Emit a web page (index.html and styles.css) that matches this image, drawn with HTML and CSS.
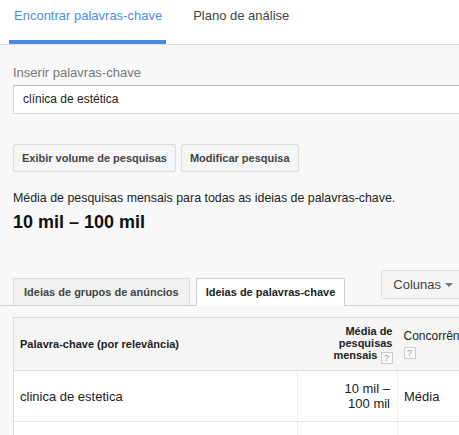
FILE: index.html
```html
<!DOCTYPE html>
<html lang="pt">
<head>
<meta charset="utf-8">
<title>Planejador de palavras-chave</title>
<link rel="stylesheet" href="styles.css">
</head>
<body>
<header class="topnav">
  <div class="toptab active">Encontrar palavras-chave</div>
  <div class="toptab">Plano de análise</div>
</header>
<main class="content">
  <div class="label">Inserir palavras-chave</div>
  <div class="input">clínica de estética</div>
  <div class="buttons">
    <button class="btn">Exibir volume de pesquisas</button>
    <button class="btn">Modificar pesquisa</button>
  </div>
  <p class="avg-label">Média de pesquisas mensais para todas as ideias de palavras-chave.</p>
  <p class="avg-value">10 mil – 100 mil</p>
</main>
<div class="tabrow">
  <div class="tab">Ideias de grupos de anúncios</div>
  <div class="tab selected">Ideias de palavras-chave</div>
  <button class="cols">Colunas <span class="caret"></span></button>
</div>
<div class="tablewrap">
  <table class="grid">
    <thead>
      <tr>
        <th class="c1">Palavra-chave (por relevância)</th>
        <th class="c2">Média de pesquisas mensais <span class="q">?</span></th>
        <th class="c3">Concorrência<br><span class="q">?</span></th>
      </tr>
    </thead>
    <tbody>
      <tr>
        <td class="c1">clinica de estetica</td>
        <td class="c2">10 mil –<br>100 mil</td>
        <td class="c3">Média</td>
      </tr>
      <tr class="empty"><td class="c1"></td><td class="c2"></td><td class="c3"></td></tr>
    </tbody>
  </table>
</div>
</body>
</html>
```
FILE: styles.css
```css
html, body {
  margin: 0;
  padding: 0;
  overflow: hidden;
  width: 459px;
  height: 435px;
}
body {
  background: #f8f8f8;
  font-family: "Liberation Sans", Arial, sans-serif;
  color: #222;
}
.topnav {
  display: flex;
  height: 44px;
  background: #fff;
  border-bottom: 1px solid #dcdcdc;
  padding-left: 9px;
  gap: 22px;
}
.toptab {
  box-sizing: border-box;
  height: 44px;
  padding: 8px 4px 0 5px;
  font-size: 13px;
  line-height: 16px;
  color: #444;
  border-bottom: 4px solid transparent;
}
.toptab.active {
  color: #4d8ee8;
  border-bottom-color: #4889e2;
}
.content {
  padding: 0 0 0 13px;
  width: 600px;
}
.label {
  margin-top: 20px;
  font-size: 13px;
  line-height: 15px;
  color: #777;
}
.input {
  box-sizing: border-box;
  margin-top: 5px;
  height: 29px;
  width: 520px;
  background: #fff;
  border: 1px solid #d9d9d9;
  border-top-color: #c0c0c0;
  padding-left: 9px;
  font-size: 12px;
  line-height: 27px;
  color: #222;
}
.buttons {
  display: flex;
  gap: 5px;
  margin-top: 30px;
}
.btn {
  box-sizing: border-box;
  height: 28px;
  padding: 0 8px;
  background: #f5f5f5;
  border: 1px solid #dcdcdc;
  border-radius: 2px;
  font-family: "Liberation Sans", Arial, sans-serif;
  font-size: 11px;
  font-weight: bold;
  color: #444;
}
.avg-label {
  margin: 19px 0 0 0;
  font-size: 12.4px;
  line-height: 15px;
  color: #222;
}
.avg-value {
  margin: 5px 0 0 0;
  font-size: 18px;
  line-height: 22px;
  font-weight: bold;
  color: #111;
}
.tabrow {
  display: flex;
  align-items: flex-start;
  width: 600px;
  height: 35px;
  margin-top: 37px;
  padding-left: 13px;
  border-bottom: 1px solid #cfcfcf;
}
.tab {
  box-sizing: border-box;
  margin-top: 8px;
  height: 27px;
  padding: 0 10px;
  margin-right: 6px;
  background: #f1f1f1;
  border: 1px solid #dcdcdc;
  border-bottom: none;
  font-size: 11px;
  font-weight: bold;
  line-height: 27px;
  color: #444;
}
.tab.selected {
  height: 28px;
  background: #fff;
  border-color: #cfcfcf;
  color: #222;
  margin-right: 0;
  padding: 0 9px;
}
.cols {
  box-sizing: border-box;
  margin-left: 36px;
  height: 29px;
  padding: 0 11px;
  background: #f5f5f5;
  border: 1px solid #dcdcdc;
  border-radius: 2px;
  font-family: "Liberation Sans", Arial, sans-serif;
  font-size: 13px;
  color: #444;
  display: flex;
  align-items: center;
  gap: 4px;
}
.caret {
  width: 0;
  height: 0;
  border-left: 4px solid transparent;
  border-right: 4px solid transparent;
  border-top: 4px solid #777;
}
.tablewrap {
  margin-top: 11px;
  padding-left: 13px;
  width: 700px;
}
.grid {
  border-collapse: collapse;
  background: #fff;
  border-left: 1px solid #dcdcdc;
  border-top: 1px solid #dcdcdc;
}
.grid th {
  background: #f5f5f5;
  height: 52px;
  font-size: 11px;
  line-height: 12px;
  font-weight: bold;
  color: #222;
  vertical-align: middle;
  border-bottom: 1px solid #dcdcdc;
  padding: 0;
}
.grid td {
  height: 50px;
  font-size: 13px;
  line-height: 15px;
  color: #222;
  border-bottom: 1px solid #e4e4e4;
  padding: 0;
}
.grid .c1 {
  width: 277px;
  padding-left: 6px;
  text-align: left;
}
.grid .c2 {
  width: 92px;
  padding-right: 6px;
  text-align: right;
}
.grid th.c2 {
  padding-right: 5px;
}
.grid .c3 {
  width: 150px;
  padding-left: 6px;
  text-align: left;
}
.grid th.c3 {
  font-weight: normal;
  font-size: 12px;
  line-height: 14px;
}
.grid td.c2, .grid td.c3 {
  border-left: 1px solid #eeeeee;
}
.grid td.c2 {
  padding-right: 7px;
}
.empty td {
  border-bottom: none;
}
.q {
  display: inline-block;
  box-sizing: border-box;
  width: 12px;
  height: 12px;
  border: 1px solid #cccccc;
  background: #fafafa;
  color: #999;
  font-size: 9px;
  line-height: 10px;
  font-weight: normal;
  text-align: center;
  vertical-align: -2px;
}
```
